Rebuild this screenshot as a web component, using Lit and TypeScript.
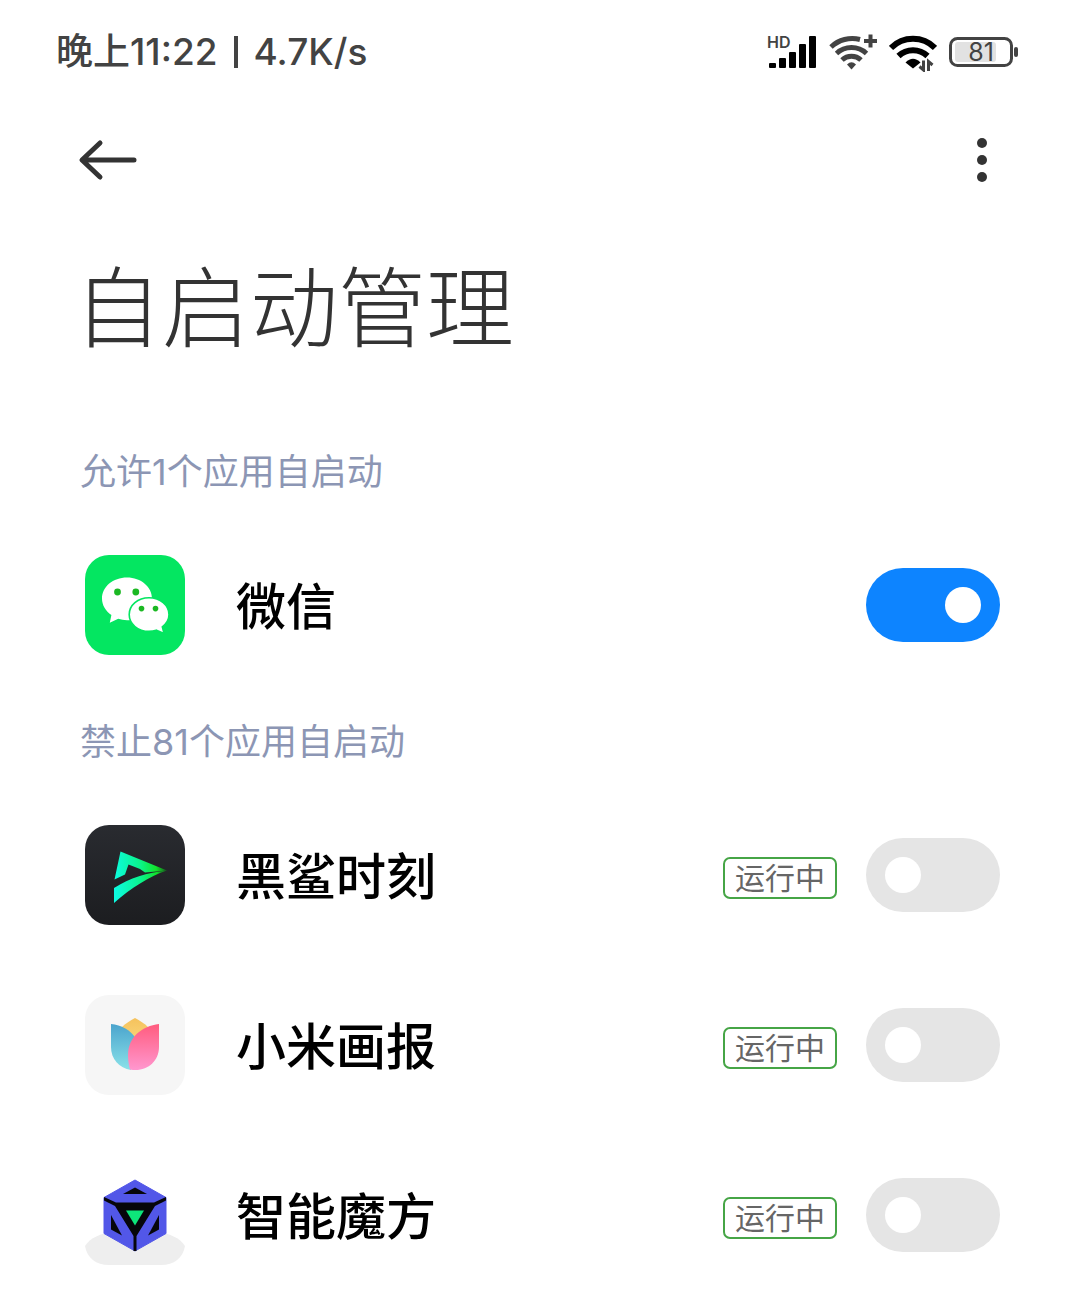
import { LitElement, html, svg, css, type TemplateResult } from "lit";
import { customElement, property, state } from "lit/decorators.js";

interface AppEntry {
  id: string;
  name: string;
  running: boolean;
  allowed: boolean;
}

const icons: Record<string, TemplateResult> = {
  wechat: svg`
    <rect width="100" height="100" rx="24" fill="#04e661"/>
    <path d="M42 22.500C28 22.500 17 31.800 17 43.500C17 50.200 20.700 56.100 26.400 60L24.800 67.800L33.200 63.800C36 64.700 39 65.200 42 65.200C56 65.200 67 55.700 67 43.700C67 31.800 56 22.500 42 22.500Z" fill="#fff"/>
    <path d="M64 42.800C52.800 42.800 44.200 50.200 44.200 59.600C44.200 69 52.800 76.400 64 76.400C66.600 76.400 69 76 71.200 75.200L79 78.400L77.300 71.800C81.500 68.700 84 64.400 84 59.600C84 50.200 75.200 42.800 64 42.800Z" fill="#fff" stroke="#04e661" stroke-width="1.600"/>
    <g fill="#1bb823">
      <circle cx="32.500" cy="37" r="3.400"/><circle cx="50.800" cy="37" r="3.400"/>
      <circle cx="56.500" cy="53.600" r="2.800"/><circle cx="70.500" cy="53.600" r="2.800"/>
    </g>`,
  shark: svg`
    <defs>
      <linearGradient id="shark-bg" x1="0" y1="0" x2="0" y2="1"><stop offset="0" stop-color="#292b30"/><stop offset="1" stop-color="#1c1d20"/></linearGradient>
      <linearGradient id="shark-fg" gradientUnits="userSpaceOnUse" x1="29" y1="50" x2="82" y2="46">
        <stop offset="0" stop-color="#0dfbe0"/><stop offset=".5" stop-color="#0af58c"/><stop offset=".8" stop-color="#12e32c"/><stop offset="1" stop-color="#155c1c"/>
      </linearGradient>
    </defs>
    <rect width="100" height="100" rx="24" fill="url(#shark-bg)"/>
    <path d="M35.500 26.500L82 45.500L60 47.500L55 44L43.500 39.500L40 49.500L29.500 54.500Z" fill="url(#shark-fg)"/>
    <path d="M29 63C45 53 62 47.500 82 45.500C65 51 46 63 29 78Z" fill="url(#shark-fg)"/>`,
  tulip: svg`
    <defs>
      <linearGradient id="tulip-blue" x1="0" y1="0" x2="0" y2="1"><stop offset="0" stop-color="#4ba4cd"/><stop offset="1" stop-color="#8ae2e9"/></linearGradient>
      <linearGradient id="tulip-pink" x1="0" y1="0" x2="0" y2="1"><stop offset="0" stop-color="#ff5c7e"/><stop offset="1" stop-color="#ff97cf"/></linearGradient>
      <linearGradient id="tulip-gold" x1="0" y1="0" x2="0" y2="1"><stop offset="0" stop-color="#f5c25c"/><stop offset="1" stop-color="#fbe08a"/></linearGradient>
    </defs>
    <rect width="100" height="100" rx="24" fill="#f6f6f6"/>
    <path d="M36 33C41 28 46 25 50 23C54 25 59 28 64 33L51 60Z" fill="url(#tulip-gold)"/>
    <path d="M26 29C36 30 46 35 51 44L46 75C34 73 26 64 26 52Z" fill="url(#tulip-blue)"/>
    <path d="M74 29C57 31 43 42 43 60C43 66 44 71 45 74.500C61 77.500 74 67 74 52Z" fill="url(#tulip-pink)"/>`,
  cube: svg`
    <path d="M0 81C5 73 16 68 28 67H72C84 68 95 73 100 81C98 93 89 100 76 100H24C11 100 2 93 0 81Z" fill="#eeeeee"/>
    <path d="M50 15L81 32.500V68.500L50 86L19 68.500V32.500Z" fill="#5257e8" stroke="#5257e8" stroke-width="1" stroke-linejoin="round"/>
    <path d="M19 32L31 37.500H69L81 32V35.500L70 41L51.500 71V86H48.500V71L30 41L19 35.500Z" fill="#06060a"/>
    <path d="M50 22.500L62 29H38Z" fill="#06060a"/>
    <path d="M26 50L37 70.500L26 64.500Z" fill="#06060a"/>
    <path d="M74 50L63 70.500L74 64.500Z" fill="#06060a"/>
    <path d="M41 45.500H59L50 60.500Z" fill="#0de57a"/>`,
};

@customElement("status-bar")
export class StatusBar extends LitElement {
  static styles = css`
    :host {
      display: flex;
      align-items: center;
      justify-content: space-between;
      height: 104px;
      padding: 0 61px 0 56px;
      color: #434343;
      font: 500 37px/48px Inter, "Noto Sans CJK SC", sans-serif;
    }
    .time {
      display: flex;
      align-items: center;
      gap: 16px;
      white-space: nowrap;
    }
    .divider {
      width: 4px;
      height: 32px;
      background: #434343;
    }
    .icons {
      display: flex;
      gap: 12px;
    }
    svg {
      display: block;
      height: 40px;
    }
    .hd {
      font: 600 16px Inter, sans-serif;
    }
    .level {
      font: 400 25px Inter, sans-serif;
    }
  `;

  render() {
    return html`
      <div class="time">
        <span>晚上11:22</span>
        <span class="divider"></span>
        <span>4.7K/s</span>
      </div>
      <div class="icons">
        <svg width="52" viewBox="0 0 52 40" role="img" aria-label="HD">
          <text class="hd" x="2" y="16" fill="#434343">HD</text>
          <g fill="#000">
            <rect x="4" y="31" width="7" height="5" rx="1"/><rect x="14" y="26" width="7" height="10" rx="1"/>
            <rect x="24" y="20" width="7" height="16" rx="1"/><rect x="34" y="12" width="7" height="24" rx="1"/>
            <rect x="44" y="4" width="7" height="32" rx="1"/>
          </g>
        </svg>
        <svg width="48" viewBox="0 0 48 40" aria-hidden="true">
          <g fill="none" stroke="#434343" stroke-width="5">
            <path d="M2 15A31 31 0 0 1 31 7.500"/><path d="M7.500 21.500A22 22 0 0 1 37.500 21.500"/><path d="M13 28A14 14 0 0 1 32 28"/>
            <path d="M35 9H48M41.500 2.500V15.500" stroke-width="4"/>
          </g>
          <path d="M18 32.500Q22.500 28 27 32.500L22.500 37.500Z" fill="#434343"/>
        </svg>
        <svg width="48" viewBox="0 0 48 40" aria-hidden="true">
          <g fill="none" stroke="#000" stroke-width="6">
            <path d="M2 16A31 31 0 0 1 46 16"/><path d="M9.500 24A21 21 0 0 1 38.500 24"/>
          </g>
          <path d="M16.500 30.500Q24 23 31.500 30.500L24 36.500Z" fill="#000"/>
          <path d="M30.500 34.500L34.500 38V28.500M39.500 39V29.500L43.500 33" fill="none" stroke="#434343" stroke-width="3"/>
        </svg>
        <svg width="70" viewBox="0 0 70 40" role="img" aria-label="81%">
          <rect x="1.500" y="6.500" width="61" height="27" rx="7" fill="#fff" stroke="#434343" stroke-width="3"/>
          <rect x="6" y="10" width="41" height="20" rx="3" fill="#e2e2e2"/>
          <rect x="65" y="15" width="4" height="10" rx="2" fill="#434343"/>
          <text class="level" x="32" y="29" text-anchor="middle" fill="#434343">81</text>
        </svg>
      </div>
    `;
  }
}

@customElement("app-row")
export class AppRow extends LitElement {
  @property({ attribute: false }) entry!: AppEntry;

  static styles = css`
    :host {
      display: block;
    }
    .row {
      display: flex;
      align-items: center;
      height: 100px;
      cursor: pointer;
    }
    .icon {
      flex: none;
      width: 100px;
      height: 100px;
      margin-right: 51px;
    }
    .name {
      flex: 1;
      padding-top: 4px;
      color: #000;
      font-size: 50px;
      font-weight: 500;
      line-height: 72px;
    }
    .badge {
      box-sizing: border-box;
      height: 42px;
      margin: 6px 29px 0 0;
      padding: 0 10px;
      border: 2px solid #46a546;
      border-radius: 7px;
      color: #666;
      font-size: 30px;
      line-height: 38px;
    }
    .switch {
      appearance: none;
      flex: none;
      display: flex;
      align-items: center;
      width: 134px;
      height: 74px;
      margin: 0;
      padding: 0 19px;
      border-radius: 37px;
      background: #e5e5e5;
      cursor: pointer;
    }
    .switch::before {
      content: "";
      width: 36px;
      height: 36px;
      border-radius: 50%;
      background: #fff;
    }
    .switch:checked {
      justify-content: flex-end;
      background: #0d84ff;
    }
  `;

  private toggle(event: Event) {
    this.entry = { ...this.entry, allowed: (event.target as HTMLInputElement).checked };
  }

  render() {
    const { id, name, running, allowed } = this.entry;
    return html`
      <label class="row">
        <svg class="icon" viewBox="0 0 100 100" aria-hidden="true">${icons[id]}</svg>
        <span class="name">${name}</span>
        ${running ? html`<span class="badge">运行中</span>` : null}
        <input class="switch" type="checkbox" role="switch" .checked=${allowed} @change=${this.toggle} />
      </label>
    `;
  }
}

@customElement("app-root")
export class AppRoot extends LitElement {
  @state() private allowed: AppEntry[] = [
    { id: "wechat", name: "微信", running: false, allowed: true },
  ];
  @state() private blocked: AppEntry[] = [
    { id: "shark", name: "黑鲨时刻", running: true, allowed: false },
    { id: "tulip", name: "小米画报", running: true, allowed: false },
    { id: "cube", name: "智能魔方", running: true, allowed: false },
  ];

  static styles = css`
    :host {
      display: block;
      min-height: 100vh;
      background: #fff;
      font-family: Inter, "Noto Sans CJK SC", sans-serif;
    }
    .toolbar {
      display: flex;
      align-items: center;
      justify-content: space-between;
      height: 112px;
      padding: 0 68px;
    }
    .tool {
      display: block;
      padding: 10px;
      border: 0;
      background: none;
      cursor: pointer;
    }
    .tool svg {
      display: block;
    }
    .title {
      margin: 0;
      padding: 28px 74px 50px;
      color: #333;
      font-size: 88px;
      font-weight: 300;
      line-height: 128px;
    }
    .heading {
      margin: 0;
      padding: 0 80px;
      color: #8c96b4;
      font-size: 36px;
      font-weight: 400;
      line-height: 100px;
    }
    .list {
      display: flex;
      flex-direction: column;
      gap: 70px;
      padding: 33px 80px 0 85px;
    }
    .group + .group {
      padding-top: 37px;
    }
  `;

  private group(heading: string, entries: AppEntry[]) {
    return html`
      <section class="group">
        <h2 class="heading">${heading}</h2>
        <div class="list">${entries.map((entry) => html`<app-row .entry=${entry}></app-row>`)}</div>
      </section>
    `;
  }

  render() {
    return html`
      <status-bar></status-bar>
      <nav class="toolbar">
        <button class="tool" aria-label="返回">
          <svg width="60" height="44" viewBox="0 0 60 44" fill="none" stroke="#333" stroke-width="5" stroke-linecap="round" stroke-linejoin="round">
            <path d="M56 22H5M22 5L4 22L22 39"/>
          </svg>
        </button>
        <button class="tool" aria-label="更多">
          <svg width="40" height="48" viewBox="0 0 40 48" fill="#333">
            <circle cx="20" cy="7" r="5"/><circle cx="20" cy="24" r="5"/><circle cx="20" cy="41" r="5"/>
          </svg>
        </button>
      </nav>
      <h1 class="title">自启动管理</h1>
      <main>
        ${this.group(`允许${this.allowed.length}个应用自启动`, this.allowed)}
        ${this.group("禁止81个应用自启动", this.blocked)}
      </main>
    `;
  }
}
